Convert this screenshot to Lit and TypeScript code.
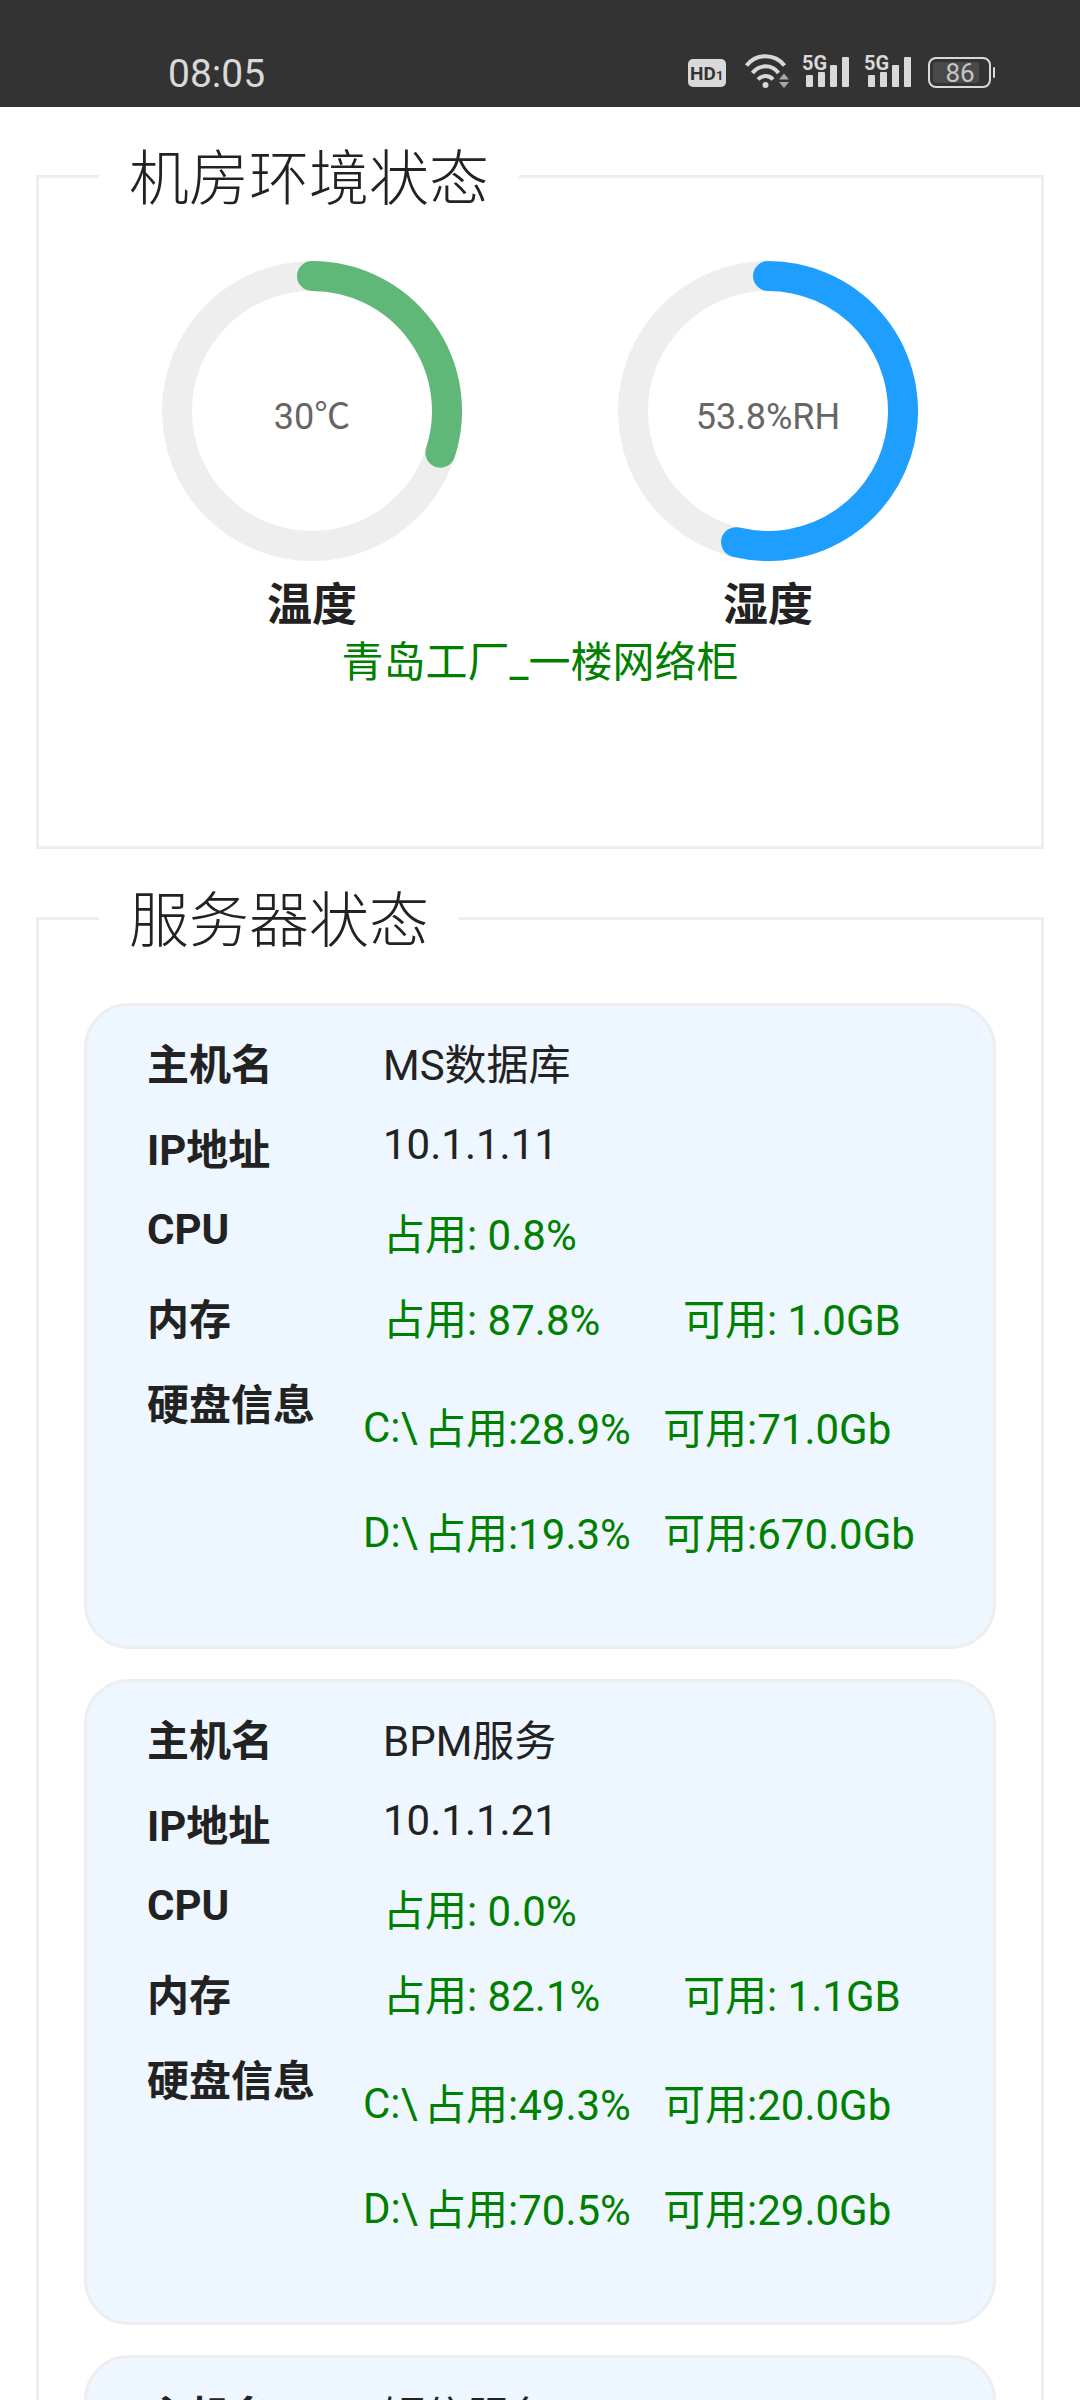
import { LitElement, html, svg, css, nothing } from "lit";
import { customElement, property } from "lit/decorators.js";

interface Disk {
  drive: string;
  used: string;
  free: string;
}

interface Host {
  name: string;
  ip?: string;
  cpu?: string;
  memory?: { used: string; free: string };
  disks?: Disk[];
}

const hosts: Host[] = [
  {
    name: "MS数据库",
    ip: "10.1.1.11",
    cpu: "0.8%",
    memory: { used: "87.8%", free: "1.0GB" },
    disks: [
      { drive: "C:\\", used: "28.9%", free: "71.0Gb" },
      { drive: "D:\\", used: "19.3%", free: "670.0Gb" },
    ],
  },
  {
    name: "BPM服务",
    ip: "10.1.1.21",
    cpu: "0.0%",
    memory: { used: "82.1%", free: "1.1GB" },
    disks: [
      { drive: "C:\\", used: "49.3%", free: "20.0Gb" },
      { drive: "D:\\", used: "70.5%", free: "29.0Gb" },
    ],
  },
  { name: "短信服务" },
];

@customElement("status-bar")
export class StatusBar extends LitElement {
  static styles = css`
    :host {
      display: flex;
      justify-content: space-between;
      align-items: flex-end;
      box-sizing: border-box;
      height: 107px;
      padding: 0 84px 0 168px;
      background: #333;
      color: #d9d9d9;
      flex: none;
    }
    .time {
      font-size: 39px;
      line-height: 66px;
    }
    .icons {
      display: flex;
      gap: 14px;
      padding-bottom: 19px;
    }
    svg {
      display: block;
      height: 34px;
      fill: #d9d9d9;
      overflow: visible;
    }
    .network {
      font-size: 20px;
      font-weight: 700;
    }
    .small {
      font-size: 19px;
      font-weight: 700;
    }
    .tiny {
      font-size: 13px;
      font-weight: 700;
    }
    .dark {
      fill: #333;
    }
    .level {
      font-size: 26px;
      fill: #c6c6c6;
    }
  `;

  private signal() {
    return html`<svg width="48" viewBox="0 0 48 34" aria-hidden="true">
      ${svg`
        <text class="network" x="-1" y="16">5G</text>
        <rect x="3" y="21" width="7" height="12" rx="1" />
        <rect x="15" y="18" width="7" height="15" rx="1" />
        <rect x="27" y="11" width="7" height="22" rx="1" />
        <rect x="39" y="3" width="7" height="30" rx="1" />
      `}
    </svg>`;
  }

  render() {
    return html`
      <time class="time">08:05</time>
      <div class="icons">
        <svg width="41" viewBox="0 0 41 34" aria-hidden="true">
          <rect x="1" y="5" width="38" height="28" rx="5" />
          <text class="small dark" x="3" y="26">HD</text>
          <text class="tiny dark" x="29" y="26">1</text>
        </svg>
        <svg width="47" viewBox="0 0 47 34" aria-hidden="true">
          <g fill="none" stroke="#d9d9d9" stroke-width="4">
            <path d="M4.500 11.500A24 24 0 0 1 42.500 11.500" />
            <path d="M10.500 19A16 16 0 0 1 36.500 19" />
            <path d="M16 25.500A10 10 0 0 1 31 25.500" />
          </g>
          <circle cx="23.500" cy="31" r="3" />
          <path fill="#a8a8a8" d="M42 19.500L47 25.500H37ZM37 28H47L42 34Z" />
        </svg>
        ${this.signal()} ${this.signal()}
        <svg width="69" viewBox="0 0 69 34" aria-hidden="true">
          <rect x="2" y="4" width="61" height="29" rx="7" fill="none" stroke="#d9d9d9" stroke-width="2" />
          <rect x="6" y="8" width="46" height="21" rx="3" fill="#4a4a4a" />
          <rect x="66" y="13" width="2" height="11" rx="1" />
          <text class="level" x="33" y="28" text-anchor="middle">86</text>
        </svg>
      </div>
    `;
  }
}

@customElement("ring-gauge")
export class RingGauge extends LitElement {
  @property({ type: Number }) percent = 0;
  @property() color = "";
  @property() text = "";
  @property() caption = "";

  static styles = css`
    :host {
      display: flex;
      flex-direction: column;
      align-items: center;
      gap: 16px;
    }
    svg {
      display: block;
      width: 300px;
      height: 300px;
    }
    circle,
    path {
      fill: none;
      stroke-width: 30px;
    }
    circle {
      stroke: #eee;
    }
    path {
      stroke-linecap: round;
    }
    text {
      font-size: 36px;
      fill: #666;
      text-anchor: middle;
    }
    .caption {
      font-size: 45px;
      line-height: 58px;
      font-weight: 700;
    }
  `;

  render() {
    const angle = (this.percent / 100) * 2 * Math.PI;
    const x = 150 + 135 * Math.sin(angle);
    const y = 150 - 135 * Math.cos(angle);
    const large = this.percent > 50 ? 1 : 0;
    return html`
      <svg viewBox="0 0 300 300" role="img" aria-label=${this.caption}>
        <circle cx="150" cy="150" r="135" />
        <path stroke=${this.color} d="M150 15A135 135 0 ${large} 1 ${x} ${y}" />
        <text x="150" y="168">${this.text}</text>
      </svg>
      <div class="caption">${this.caption}</div>
    `;
  }
}

@customElement("host-card")
export class HostCard extends LitElement {
  @property({ attribute: false }) host!: Host;

  static styles = css`
    :host {
      display: block;
      padding: 17px 24px 59px 60px;
      border: 3px solid #eee;
      border-radius: 45px;
      background: #eef6ff;
      font-size: 42px;
      line-height: 85px;
      white-space: nowrap;
    }
    dl,
    dd {
      margin: 0;
    }
    .row {
      display: grid;
      grid-template-columns: 236px 1fr;
      min-height: 85px;
    }
    .row.disks {
      grid-template-columns: 216px 1fr;
    }
    dt {
      font-weight: 700;
    }
    .latin {
      line-height: 73px;
    }
    .usage {
      display: grid;
      grid-template-columns: 300px 1fr;
      color: green;
    }
    table {
      margin-top: 14px;
      border-collapse: collapse;
      table-layout: fixed;
      width: 100%;
      color: green;
      line-height: 105px;
    }
    th,
    td {
      padding: 0;
      font-weight: 400;
      text-align: left;
      vertical-align: top;
    }
    .drive {
      width: 61px;
      line-height: 101px;
    }
    .used {
      width: 239px;
    }
  `;

  render() {
    const { name, ip, cpu, memory, disks } = this.host;
    return html`
      <dl>
        <div class="row"><dt>主机名</dt><dd>${name}</dd></div>
        ${ip ? html`<div class="row"><dt>IP地址</dt><dd class="latin">${ip}</dd></div>` : nothing}
        ${cpu
          ? html`<div class="row"><dt class="latin">CPU</dt><dd class="usage"><span>占用: ${cpu}</span></dd></div>`
          : nothing}
        ${memory
          ? html`<div class="row">
              <dt>内存</dt>
              <dd class="usage"><span>占用: ${memory.used}</span><span>可用: ${memory.free}</span></dd>
            </div>`
          : nothing}
        ${disks
          ? html`<div class="row disks">
              <dt>硬盘信息</dt>
              <dd>
                <table>
                  <tbody>
                    ${disks.map(
                      (d) => html`<tr>
                        <th class="drive" scope="row">${d.drive}</th>
                        <td class="used">占用:${d.used}</td>
                        <td>可用:${d.free}</td>
                      </tr>`
                    )}
                  </tbody>
                </table>
              </dd>
            </div>`
          : nothing}
      </dl>
    `;
  }
}

@customElement("app-root")
export class AppRoot extends LitElement {
  static styles = css`
    :host {
      display: flex;
      flex-direction: column;
      height: 100vh;
      background: #fff;
      color: #222;
      font-family: Roboto, "Noto Sans CJK SC", sans-serif;
    }
    main {
      flex: 1;
      min-height: 0;
      overflow-y: auto;
      scrollbar-width: none;
    }
    fieldset {
      min-width: 0;
      margin: 34px 36px 0;
      padding: 49px 45px 45px;
      border: 3px solid #eee;
    }
    legend {
      margin-left: 15px;
      padding: 6px 30px 0;
      font-size: 60px;
      line-height: 65px;
      font-weight: 300;
    }
    .environment {
      padding-bottom: 155px;
    }
    .gauges {
      display: grid;
      grid-template-columns: 1fr 1fr;
    }
    .location {
      margin: 0;
      font-size: 42px;
      line-height: 56px;
      text-align: center;
      color: green;
    }
    .hosts {
      display: flex;
      flex-direction: column;
      gap: 30px;
    }
  `;

  render() {
    return html`
      <status-bar></status-bar>
      <main>
        <fieldset class="environment">
          <legend>机房环境状态</legend>
          <div class="gauges">
            <ring-gauge percent="30" color="#5fb878" text="30℃" caption="温度"></ring-gauge>
            <ring-gauge percent="53.8" color="#1e9fff" text="53.8%RH" caption="湿度"></ring-gauge>
          </div>
          <p class="location">青岛工厂_一楼网络柜</p>
        </fieldset>
        <fieldset>
          <legend>服务器状态</legend>
          <div class="hosts">${hosts.map((h) => html`<host-card .host=${h}></host-card>`)}</div>
        </fieldset>
      </main>
    `;
  }
}
